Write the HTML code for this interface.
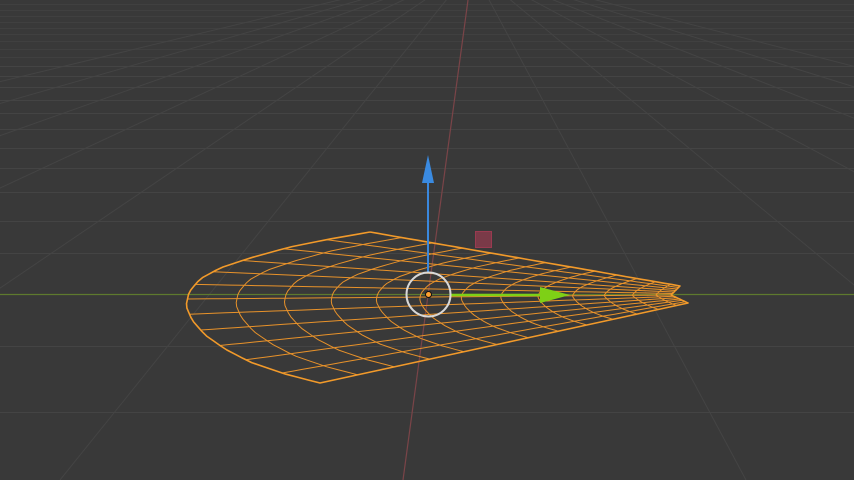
<!DOCTYPE html>
<html><head><meta charset="utf-8"><style>
html,body{margin:0;padding:0;background:#393939;overflow:hidden}
svg{display:block}
</style></head><body>
<svg id="s" width="854" height="480" viewBox="0 0 854 480" xmlns="http://www.w3.org/2000/svg">
<rect width="854" height="480" fill="#393939"/>
<g id="grid" stroke="#444444" stroke-width="1" fill="none"></g>
<line x1="0" y1="294.5" x2="854" y2="294.5" stroke="#5e7a2e" stroke-width="1.3"/>
<line x1="468" y1="0" x2="403" y2="480" stroke="#7a4448" stroke-width="1.2"/>
<g id="mesh" fill="none" stroke="#e8922a" stroke-width="1"></g>
<path id="outline" fill="none" stroke="#f29a2a" stroke-width="1.6" stroke-linejoin="round"/>
<line x1="428" y1="272" x2="428" y2="180" stroke="#3a88dd" stroke-width="2"/>
<polygon points="428,155 422,183 434,183" fill="#3a8ae0"/>
<line x1="450" y1="295" x2="542" y2="295" stroke="#7ed016" stroke-width="2.5"/>
<polygon points="540,287 540,303 570,295" fill="#7ed016"/>
<rect x="475.5" y="231.5" width="16" height="16" fill="#7a3a48" stroke="#9a3a50" stroke-width="1"/>
<circle cx="428.5" cy="294.5" r="22" fill="none" stroke="#d8d8d8" stroke-width="2"/>
<circle cx="428.5" cy="294.5" r="3" fill="#ffa030" stroke="#111" stroke-width="1"/>
</svg>
<script>
var NS="http://www.w3.org/2000/svg";
function ln(g,x1,y1,x2,y2,c,w){var l=document.createElementNS(NS,"line");l.setAttribute("x1",x1);l.setAttribute("y1",y1);l.setAttribute("x2",x2);l.setAttribute("y2",y2);if(c)l.setAttribute("stroke",c);if(w)l.setAttribute("stroke-width",w);g.appendChild(l);}
var g=document.getElementById("grid");
[412,346,253,221,192,168,148,129,113,100,87,76,66,57,49,41,34,28,22,16,10,4].forEach(function(y){ln(g,0,y+.5,854,y+.5,y<60?"#404040":null);});
var vx=472,vy=-32;
for(var k=-6;k<=6;k++){if(k==0)continue;var bx=403+343*k;ln(g,vx,vy,bx,480);}
var arc=[[370,232],[330,239],[290,247],[250,258],[220,268],[200,279],[189,292],[186,306],[192,320],[205,335],[225,349],[250,362],[285,374],[320,383]];
function A(u){var f=u*(arc.length-1),i=Math.min(Math.floor(f),arc.length-2),t=f-i;return[arc[i][0]+(arc[i+1][0]-arc[i][0])*t,arc[i][1]+(arc[i+1][1]-arc[i][1])*t];}
function T(u){var a,b,t;if(u<0.5){a=[680,286];b=[671,295];t=u/0.5;}else{a=[671,295];b=[688,303];t=(u-0.5)/0.5;}return[a[0]+(b[0]-a[0])*t,a[1]+(b[1]-a[1])*t];}
function P(u,v){var a=A(u),b=T(u);return[a[0]+(b[0]-a[0])*v,a[1]+(b[1]-a[1])*v];}
function V(j,n){var s=j/n;return 1-Math.pow(1-s,1.35);}
var m=document.getElementById("mesh");
var NU=12,NV=13,STEP=40;
for(var i=1;i<NU;i++){var u=i/NU,d="";for(var s=0;s<=STEP;s++){var p=P(u,s/STEP);d+=(s?"L":"M")+p[0].toFixed(1)+","+p[1].toFixed(1);}var pa=document.createElementNS(NS,"path");pa.setAttribute("d",d);m.appendChild(pa);}
for(var j=1;j<NV;j++){var v=V(j,NV),d="";for(var s=0;s<=STEP;s++){var p=P(s/STEP,v);d+=(s?"L":"M")+p[0].toFixed(1)+","+p[1].toFixed(1);}var pa=document.createElementNS(NS,"path");pa.setAttribute("d",d);m.appendChild(pa);}
var d="M"+P(0,0).join(",");
for(var s=0;s<=STEP;s++){var p=P(0,s/STEP);d+="L"+p[0].toFixed(1)+","+p[1].toFixed(1);}
for(var s=0;s<=STEP;s++){var p=T(s/STEP);d+="L"+p[0].toFixed(1)+","+p[1].toFixed(1);}
for(var s=STEP;s>=0;s--){var p=P(1,s/STEP);d+="L"+p[0].toFixed(1)+","+p[1].toFixed(1);}
for(var s=STEP;s>=0;s--){var p=A(s/STEP);d+="L"+p[0].toFixed(1)+","+p[1].toFixed(1);}
document.getElementById("outline").setAttribute("d",d);
</script>
</body></html>
